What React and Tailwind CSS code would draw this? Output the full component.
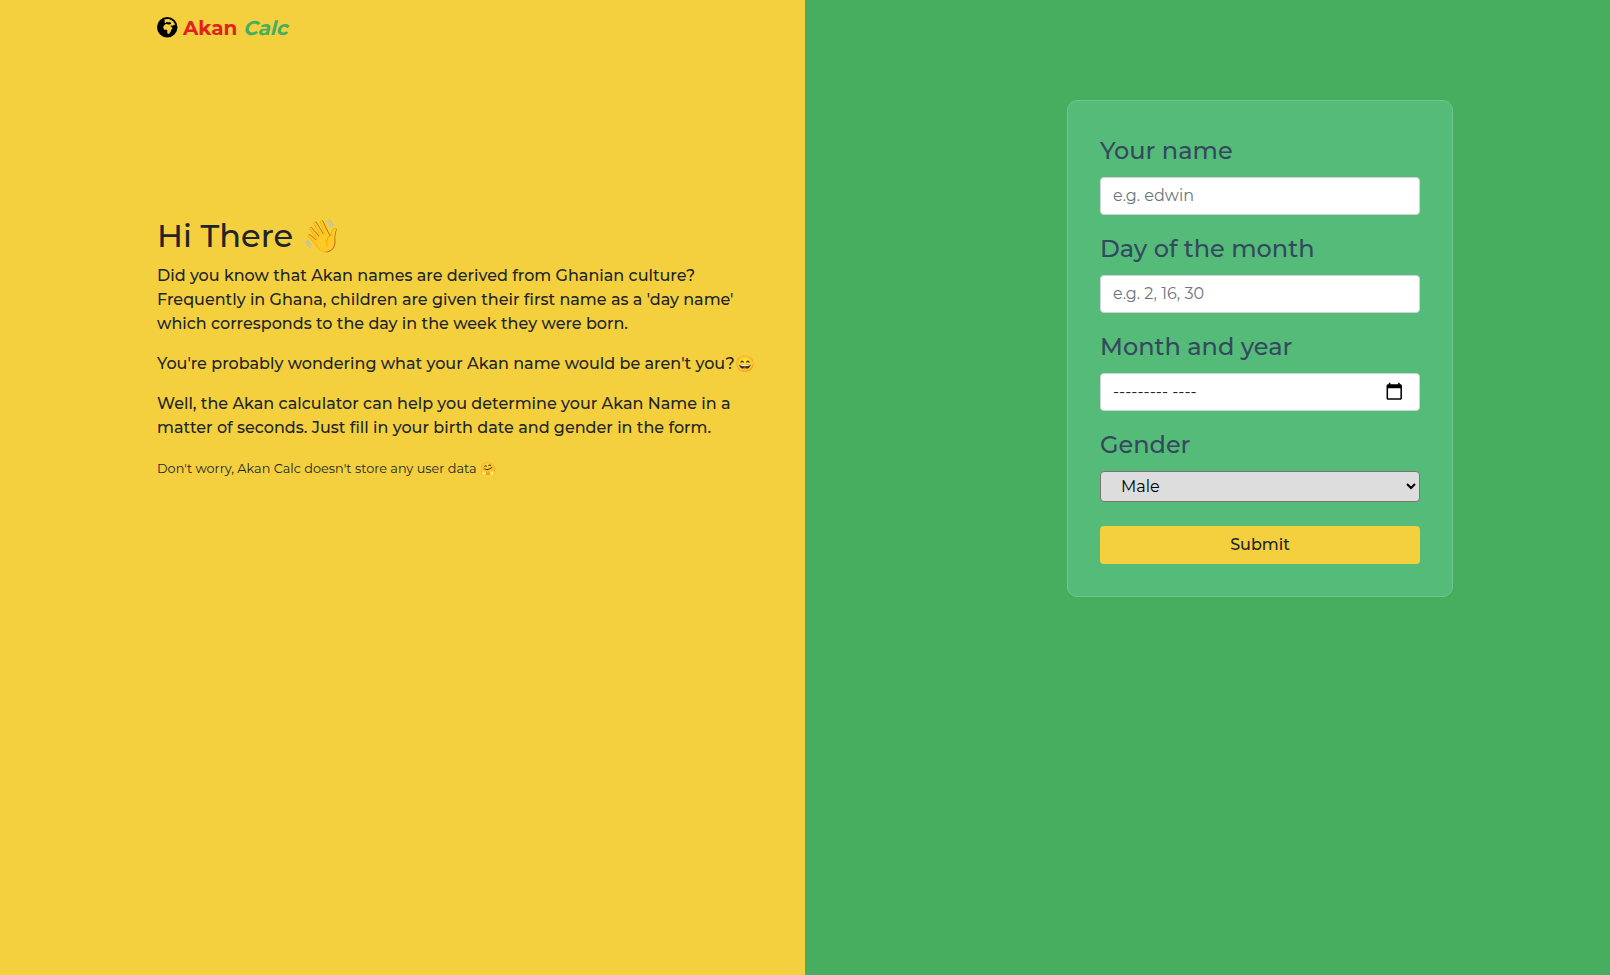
import { FaEarthAfrica } from "react-icons/fa6";

const label = "mb-2 block h-9 whitespace-nowrap text-2xl font-medium leading-9 text-[#34495e]";
const field =
  "mb-4 block h-[38px] w-full rounded border border-[#ced4da] bg-white px-3 pb-[7px] pt-[5px] text-base leading-6 text-[#212529] placeholder:text-[#6c757d]";

function MonthField() {
  return (
    <div
      id="month"
      className="mb-4 flex h-[38px] w-full items-center justify-between rounded border border-[#ced4da] bg-white pl-3 pr-[15.5px] text-base text-[#212529]"
    >
      <span className="whitespace-nowrap">--------- ----</span>
      <svg className="mb-[2px] size-[18.5px]" viewBox="0 0 24 24" fill="black">
        <path d="M20 3h-1V1h-2v2H7V1H5v2H4c-1.100 0-2 .9-2 2v16c0 1.100.9 2 2 2h16c1.100 0 2-.9 2-2V5c0-1.100-.9-2-2-2zm0 18H4V8h16v13z" />
      </svg>
    </div>
  );
}

export default function App() {
  return (
    <div className="grid h-screen grid-cols-2 overflow-hidden font-['Montserrat','Inter',sans-serif] text-[#212529]">
      <section className="bg-[#f4d03f] pl-[157px]">
        <nav className="flex h-14 items-center whitespace-nowrap text-xl font-bold">
          <FaEarthAfrica className="mb-[1.5px] mr-[5.5px] size-[20.5px] text-black" />
          <span className="mr-[6px] text-[#e0221f]">Akan</span>
          <span className="inline-block origin-[0_75%] -skew-x-[14deg] text-[#48ae5f]">Calc</span>
        </nav>
        <main className="whitespace-nowrap pt-[160px] text-base font-medium leading-6">
          <h1 className="mb-[9px] text-[32px] font-medium leading-[39px]">Hi There 👋</h1>
          <p className="mb-4">
            Did you know that Akan names are derived from Ghanian culture?
            <br />
            Frequently in Ghana, children are given their first name as a 'day name'
            <br />
            which corresponds to the day in the week they were born.
          </p>
          <p className="mb-4">You're probably wondering what your Akan name would be aren't you?😄</p>
          <p className="mb-4">
            Well, the Akan calculator can help you determine your Akan Name in a
            <br />
            matter of seconds. Just fill in your birth date and gender in the form.
          </p>
          <p className="pt-px text-[12.8px] font-normal tracking-[0.02px]">
            Don't worry, Akan Calc doesn't store any user data 🤗
          </p>
        </main>
      </section>

      <section className="bg-[#48ae5f] pl-[262px] pt-[100px]">
        <form
          className="w-[386px] rounded-[10px] border border-[#6cc590] bg-[#55bb79] p-8"
          onSubmit={(e) => e.preventDefault()}
        >
          <label className={label} htmlFor="name">Your name</label>
          <input id="name" className={field} placeholder="e.g. edwin" />
          <label className={label} htmlFor="day">Day of the month</label>
          <input id="day" className={field} placeholder="e.g. 2, 16, 30" />
          <label className={label} htmlFor="month">Month and year</label>
          <MonthField />
          <label className={label} htmlFor="gender">Gender</label>
          <select
            id="gender"
            className="mb-6 block h-[31px] w-full rounded border border-[#767676] bg-[#dddddd] px-4 text-base font-normal text-black"
          >
            <option>Male</option>
            <option>Female</option>
          </select>
          <button className="block h-[38px] w-full rounded bg-[#f4d03f] pb-px text-base font-medium">Submit</button>
        </form>
      </section>
    </div>
  );
}
